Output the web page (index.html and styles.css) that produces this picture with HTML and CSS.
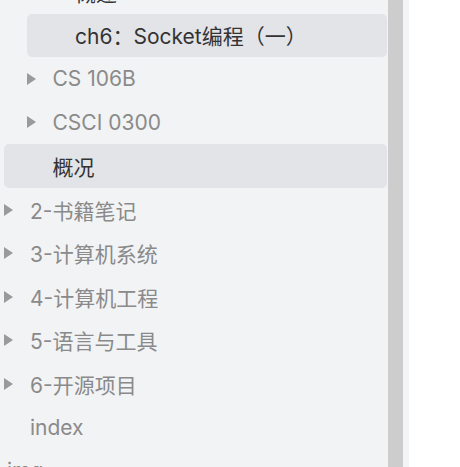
FILE: index.html
```html
<!DOCTYPE html>
<html lang="zh">
<head>
<meta charset="utf-8">
<link rel="stylesheet" href="styles.css">
</head>
<body>
<div class="frame">
  <nav class="sidebar">
    <ul class="tree">
      <li class="row lv2 first"><span class="caret"></span><span class="label">概述</span></li>
      <li class="row lv2 active"><span class="caret"></span><span class="label">ch6：Socket编程（一）</span></li>
      <li class="row lv1"><span class="caret"><svg class="tri" viewBox="0 0 9 12"><path d="M0 0 L9 6 L0 12 Z"/></svg></span><span class="label">CS 106B</span></li>
      <li class="row lv1"><span class="caret"><svg class="tri" viewBox="0 0 9 12"><path d="M0 0 L9 6 L0 12 Z"/></svg></span><span class="label">CSCI 0300</span></li>
      <li class="row lv1 active"><span class="caret"></span><span class="label">概况</span></li>
      <li class="row lv0"><span class="caret"><svg class="tri" viewBox="0 0 9 12"><path d="M0 0 L9 6 L0 12 Z"/></svg></span><span class="label">2-书籍笔记</span></li>
      <li class="row lv0"><span class="caret"><svg class="tri" viewBox="0 0 9 12"><path d="M0 0 L9 6 L0 12 Z"/></svg></span><span class="label">3-计算机系统</span></li>
      <li class="row lv0"><span class="caret"><svg class="tri" viewBox="0 0 9 12"><path d="M0 0 L9 6 L0 12 Z"/></svg></span><span class="label">4-计算机工程</span></li>
      <li class="row lv0"><span class="caret"><svg class="tri" viewBox="0 0 9 12"><path d="M0 0 L9 6 L0 12 Z"/></svg></span><span class="label">5-语言与工具</span></li>
      <li class="row lv0"><span class="caret"><svg class="tri" viewBox="0 0 9 12"><path d="M0 0 L9 6 L0 12 Z"/></svg></span><span class="label">6-开源项目</span></li>
      <li class="row lv0"><span class="caret"></span><span class="label">index</span></li>
      <li class="row root"><span class="label">img</span></li>
    </ul>
  </nav>
  <div class="scrollbar"></div>
  <div class="gutter"></div>
  <main class="content"></main>
</div>
</body>
</html>
```
FILE: styles.css
```css
html, body {
  margin: 0;
  padding: 0;
  background: #ffffff;
  height: 100%;
  overflow: hidden;
}
.frame {
  display: flex;
  height: 467px;
  font-family: "Inter", "Noto Sans CJK SC", sans-serif;
  font-size: 21px;
}
.sidebar {
  width: 388px;
  flex: none;
  background: #f2f3f5;
  overflow: hidden;
}
.tree {
  list-style: none;
  margin: -30px 0 0 0;
  padding: 0;
}
.row {
  display: flex;
  align-items: center;
  height: 43.56px;
  margin-right: 1px;
  border-radius: 5px;
  color: #8a8a8a;
  white-space: nowrap;
}
.row.active {
  background: #e3e4e8;
  color: #333333;
}
.lv0 { padding-left: 4px; }
.lv1 { margin-left: 4px; padding-left: 22.5px; }
.lv2 { margin-left: 26.5px; padding-left: 22.5px; }
.root { padding-left: 7px; }
.first { color: #333333; }
.caret {
  width: 26px;
  flex: none;
  display: flex;
  align-items: center;
}
.tri {
  width: 9px;
  height: 12px;
  fill: #9a9a9a;
}
.scrollbar {
  width: 15px;
  flex: none;
  background: #cdcdcd;
}
.gutter {
  width: 6px;
  flex: none;
  background: #f3f4f6;
}
.content {
  flex: 1;
  background: #ffffff;
}
```
